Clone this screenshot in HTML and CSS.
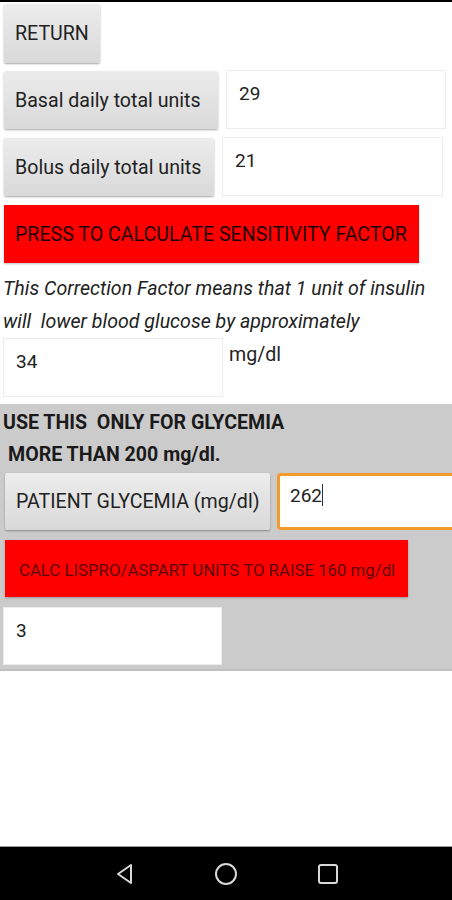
FILE: index.html
```html
<!DOCTYPE html>
<html lang="en">
<head>
    <meta charset="UTF-8">
    <meta name="viewport" content="width=device-width, initial-scale=1.0">
    <title>Sensitivity Factor</title>
    <link rel="stylesheet" href="styles.css">
</head>
<body>
    <div class="top-line"></div>

    <div class="screen">
        <div class="row row-return">
            <div class="btn btn-return">RETURN</div>
        </div>

        <div class="row row-basal">
            <div class="btn btn-basal">Basal daily total units</div>
            <div class="field field-basal">29</div>
        </div>

        <div class="row row-bolus">
            <div class="btn btn-bolus">Bolus daily total units</div>
            <div class="field field-bolus">21</div>
        </div>

        <div class="row row-calc">
            <div class="btn-red btn-calc">PRESS TO CALCULATE SENSITIVITY FACTOR</div>
        </div>

        <p class="note">This Correction Factor means that 1 unit of insulin<br>will &nbsp;lower blood glucose by approximately</p>

        <div class="row row-result">
            <div class="field field-result">34</div>
            <span class="unit">mg/dl</span>
        </div>

        <div class="glycemia">
            <div class="warn warn-1">USE THIS &nbsp;ONLY FOR GLYCEMIA</div>
            <div class="warn warn-2">MORE THAN 200 mg/dl.</div>

            <div class="row row-patient">
                <div class="btn btn-patient">PATIENT GLYCEMIA (mg/dl)</div>
                <div class="field field-patient">262<span class="caret"></span></div>
            </div>

            <div class="row row-lispro">
                <div class="btn-red btn-lispro">CALC LISPRO/ASPART UNITS TO RAISE 160 mg/dl</div>
            </div>

            <div class="row row-units">
                <div class="field field-units">3</div>
            </div>
        </div>
    </div>

    <!-- barra di navigazione android -->
    <div class="navbar">
        <svg class="nav-icon" width="20" height="22" viewBox="0 0 20 22">
            <path d="M16 2 L3 11 L16 20 Z" fill="none" stroke="#d8d8d8" stroke-width="2" stroke-linejoin="round"/>
        </svg>
        <svg class="nav-icon" width="24" height="24" viewBox="0 0 24 24">
            <circle cx="12" cy="12" r="10" fill="none" stroke="#d8d8d8" stroke-width="2"/>
        </svg>
        <svg class="nav-icon" width="22" height="22" viewBox="0 0 22 22">
            <rect x="2" y="2" width="18" height="18" rx="2" fill="none" stroke="#d8d8d8" stroke-width="2"/>
        </svg>
    </div>
</body>
</html>
```

FILE: styles.css
```css
body {
    margin: 0;
    font-family: Roboto, "Liberation Sans", sans-serif;
    background-color: white;
    color: #222;
    width: 452px;
    height: 900px;
    display: flex;
    flex-direction: column;
    overflow: hidden;
}
.top-line {
    height: 2px;
    background-color: #000;
}
.screen {
    flex: 1;
}
.row {
    display: flex;
    align-items: flex-start;
}
.btn {
    height: 58px;
    box-sizing: border-box;
    display: flex;
    align-items: center;
    padding: 0 11px;
    font-size: 19.6px;
    color: #222;
    background: linear-gradient(#ececec, #d9d9d9);
    border-radius: 2px;
    box-shadow: 0 1px 2px rgba(0,0,0,0.35);
    white-space: nowrap;
}
.btn-red {
    height: 57px;
    box-sizing: border-box;
    display: flex;
    align-items: center;
    background-color: #ff0000;
    color: #1f0000;
    font-size: 19.6px;
    white-space: nowrap;
    box-shadow: 0 1px 2px rgba(0,0,0,0.25);
}
.field {
    box-sizing: border-box;
    background-color: #fff;
    border: 1px solid #ececec;
    font-size: 19px;
    color: #222;
    padding: 11px 12px 0;
}
.row-return {
    margin: 2px 0 0 4px;
}
.btn-return {
    width: 96px;
    height: 59px;
}
.row-basal {
    margin: 8px 0 0 4px;
}
.btn-basal {
    width: 214px;
}
.field-basal {
    width: 220px;
    height: 59px;
    margin: -1px 0 0 8px;
}
.row-bolus {
    margin: 9px 0 0 4px;
}
.btn-bolus {
    width: 210px;
}
.field-bolus {
    width: 221px;
    height: 59px;
    margin: -1px 0 0 8px;
}
.row-calc {
    margin: 9px 0 0 4px;
}
.btn-calc {
    width: 415px;
    height: 58px;
    padding-left: 11px;
}
.note {
    margin: 9px 0 0 3px;
    font-size: 19.6px;
    font-style: italic;
    line-height: 33px;
    color: #222;
}
.row-result {
    margin: 0 0 0 3px;
}
.field-result {
    width: 220px;
    height: 59px;
}
.unit {
    margin: 5px 0 0 6px;
    font-size: 19.6px;
}
.glycemia {
    margin-top: 7px;
    background-color: #cbcbcb;
    height: 267px;
    padding-top: 1px;
    box-sizing: border-box;
    border-bottom: 2px solid #c0c0c0;
}
.warn {
    font-size: 19.6px;
    font-weight: bold;
    color: #1a1a1a;
    line-height: 32px;
}
.warn-1 {
    margin: 2px 0 0 3px;
}
.warn-2 {
    margin-left: 8px;
}
.row-patient {
    margin: 2px 0 0 5px;
}
.btn-patient {
    width: 265px;
    height: 57px;
}
.field-patient {
    flex: 1;
    height: 57px;
    margin-left: 7px;
    border: 3px solid #f39a2c;
    border-right: none;
    border-radius: 4px 0 0 4px;
    padding: 8px 10px 0;
}
.caret {
    display: inline-block;
    width: 1px;
    height: 22px;
    background-color: #333;
    vertical-align: -4px;
}
.row-lispro {
    margin: 10px 0 0 5px;
}
.btn-lispro {
    width: 403px;
    font-size: 16.8px;
    color: #5a0606;
    padding-left: 14px;
    padding-top: 2px;
}
.row-units {
    margin: 10px 0 0 3px;
}
.field-units {
    width: 219px;
    height: 58px;
}
.navbar {
    height: 53px;
    background-color: #000;
    border-top: 1px solid #9a9a9a;
    display: flex;
    align-items: center;
    justify-content: center;
    gap: 79px;
    padding-left: 2px;
}
.nav-icon {
    display: block;
}
```
